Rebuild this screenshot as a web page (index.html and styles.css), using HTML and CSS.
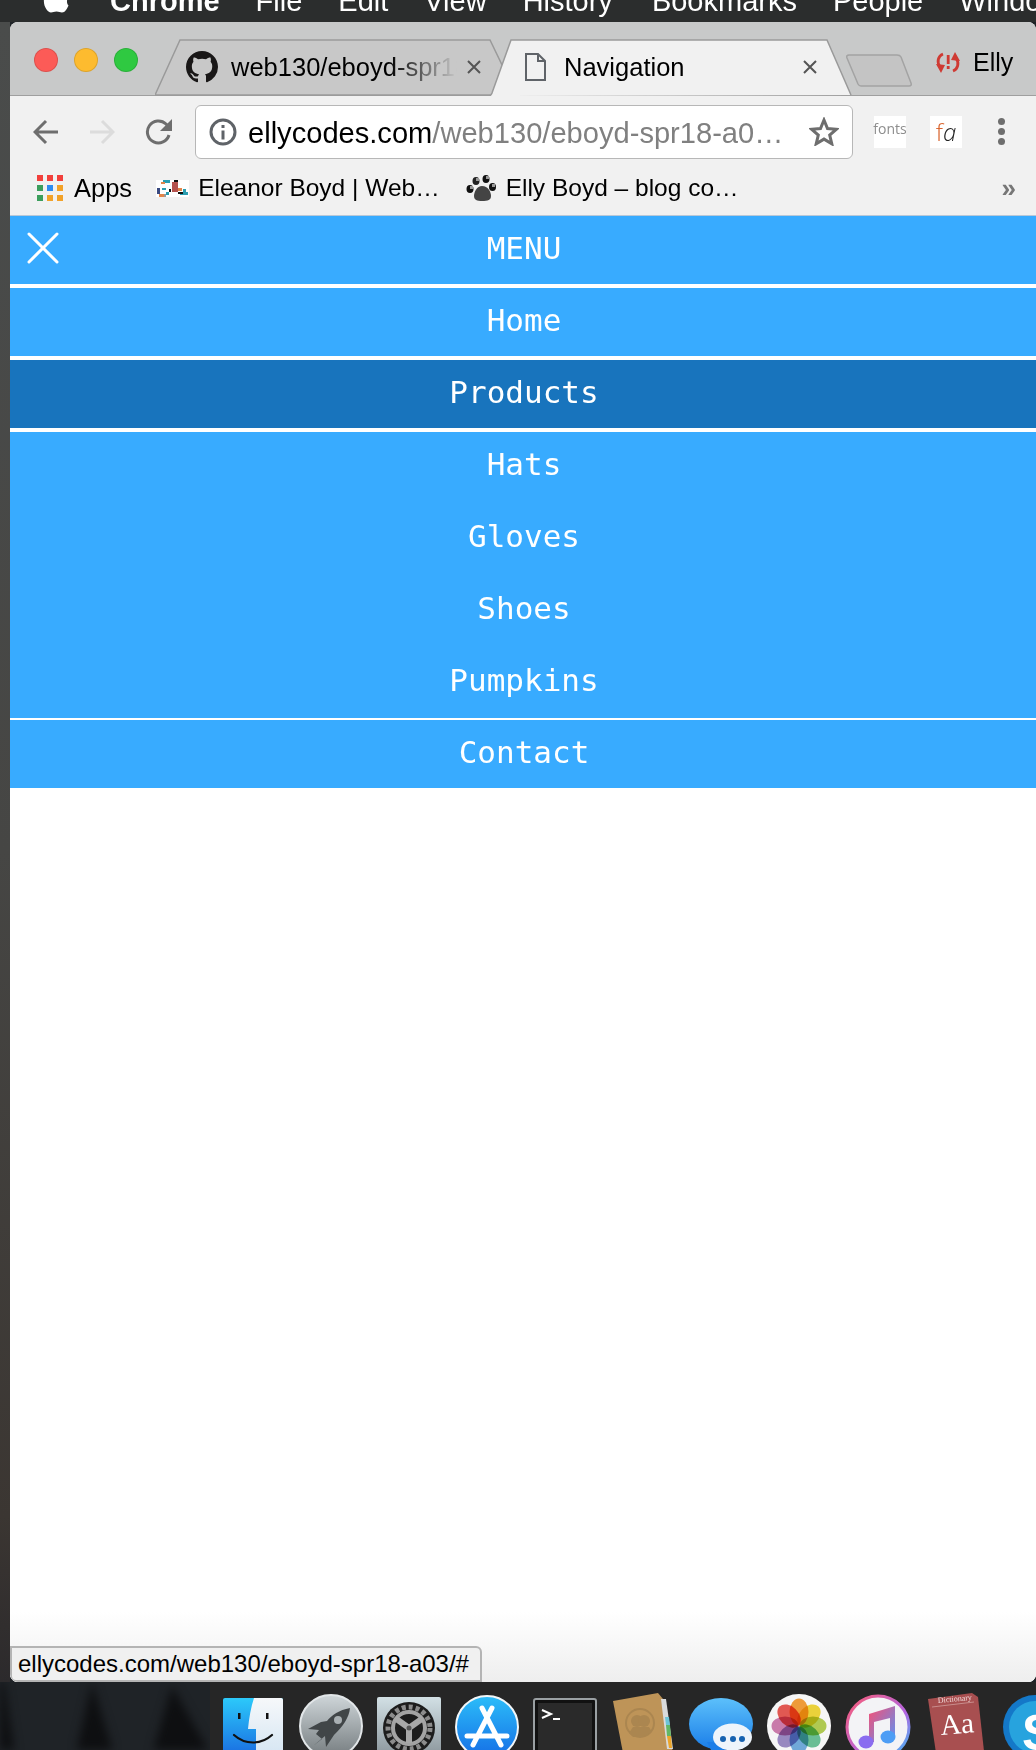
FILE: index.html
```html
<!DOCTYPE html>
<html lang="en">
<head>
<meta charset="utf-8">
<title>Navigation</title>
<link rel="stylesheet" href="styles.css">
</head>
<body>
<div class="menubar">
  <svg class="apple" width="26" height="14" viewBox="0 0 26 14"><path fill="#fff" d="M1 0H24.500C23.500 2 24 5 25.500 6.500 24 10 22 13.500 19 13.500 17 13.500 16 12.500 13.500 12.500 11 12.500 10 13.500 8 13.500 4.500 13.500 0 7 1 0Z"/></svg>
  <span class="menu-app">Chrome</span>
  <span>File</span><span>Edit</span><span>View</span><span>History</span><span class="menu-bm">Bookmarks</span><span>People</span><span>Window</span>
</div>
<div class="middle">
  <div class="desk-strip"></div>
  <div class="window">
    <div class="tabstrip">
      <div class="lights"><i class="light red"></i><i class="light yellow"></i><i class="light green"></i></div>
      <div class="tab tab-back">
        <svg class="tab-shape" viewBox="0 0 348 57" preserveAspectRatio="none"><path d="M0 56 25 1H335L348 28V56Z" fill="#c8c8c8" stroke="#9a9a9a" stroke-width="1.500"/></svg>
        <svg class="favicon-gh" width="32" height="32" viewBox="0 0 16 16"><path fill="#191717" d="M8 0C3.580 0 0 3.580 0 8c0 3.540 2.290 6.530 5.470 7.590.4.070.55-.17.55-.38 0-.19-.01-.82-.01-1.490-2.010.37-2.530-.49-2.690-.94-.09-.23-.48-.94-.82-1.130-.28-.15-.68-.52-.01-.53.63-.01 1.080.58 1.230.82.72 1.210 1.870.87 2.330.66.070-.52.28-.87.51-1.070-1.780-.2-3.640-.89-3.640-3.950 0-.87.31-1.590.82-2.150-.08-.2-.36-1.020.08-2.120 0 0 .67-.21 2.200.82.64-.18 1.320-.27 2-.27s1.360.09 2 .27c1.530-1.040 2.200-.82 2.200-.82.44 1.100.16 1.920.08 2.120.51.560.82 1.270.82 2.150 0 3.070-1.870 3.750-3.650 3.950.29.250.54.730.54 1.480 0 1.070-.01 1.930-.01 2.200 0 .21.150.46.550.38A8.010 8.010 0 0 0 16 8c0-4.420-3.580-8-8-8z"/></svg>
        <span class="tab-title fade">web130/eboyd-spr18</span>
        <svg class="tab-x" width="14" height="14" viewBox="0 0 14 14"><path d="M1 1 13 13M13 1 1 13" stroke="#555" stroke-width="2"/></svg>
      </div>
      <div class="tab tab-active">
        <svg class="tab-shape" viewBox="0 0 363 58" preserveAspectRatio="none"><path d="M0 58C1 58 2 57 3 55L22 1H338L362 57" fill="#f1f1f1" stroke="#9a9a9a" stroke-width="1.500"/></svg>
        <svg class="page-icon" width="21" height="28" viewBox="0 0 21 28"><path d="M1 1H13L20 8V27H1Z M13 1V8H20" fill="none" stroke="#5f6368" stroke-width="2"/></svg>
        <span class="tab-title">Navigation</span>
        <svg class="tab-x" width="14" height="14" viewBox="0 0 14 14"><path d="M1 1 13 13M13 1 1 13" stroke="#555" stroke-width="2"/></svg>
      </div>
      <svg class="newtab" width="66" height="33" viewBox="0 0 66 33"><path d="M3 1H51Q54 1 55 3L65 29Q66 32 63 32H15Q13 32 12 30L1 4Q0 1 3 1Z" fill="#c4c4c4" stroke="#a3a3a3" stroke-width="1.500"/></svg>
      <div class="profile">
        <svg width="26" height="23" viewBox="0 0 26 23"><g fill="none" stroke="#cf3a33" stroke-width="2.800"><path d="M8 3C3 5 1.500 11 5 16"/><path d="M18 20C23 18 24.500 12 21 7"/></g><path fill="#cf3a33" d="M1 13 10 14 6 22ZM25 10 16 9 20 1Z"/><rect x="11.800" y="4" width="2.800" height="9" fill="#cf3a33"/><rect x="11.800" y="15" width="2.800" height="3" fill="#cf3a33"/></svg>
        <span>Elly</span>
      </div>
    </div>
    <div class="toolbar">
      <div class="nav-icons">
        <svg width="26" height="26" viewBox="0 0 26 26"><path d="M25 13H3M13 2 2 13 13 24" fill="none" stroke="#6e6e6e" stroke-width="3"/></svg>
        <svg width="26" height="26" viewBox="0 0 26 26"><path d="M1 13H23M13 2 24 13 13 24" fill="none" stroke="#dcdcdc" stroke-width="3"/></svg>
        <svg width="28" height="28" viewBox="0 0 28 28"><path d="M24 17A11 11 0 1 1 21 6L25 10" fill="none" stroke="#6e6e6e" stroke-width="3"/><path d="M27 1V13H15Z" fill="#6e6e6e"/></svg>
      </div>
      <div class="omnibox">
        <svg width="28" height="28" viewBox="0 0 28 28"><circle cx="14" cy="14" r="12" fill="none" stroke="#5f6368" stroke-width="3"/><rect x="12.500" y="12.500" width="3" height="9" fill="#5f6368"/><rect x="12.500" y="7" width="3" height="3" fill="#5f6368"/></svg>
        <span class="url"><b>ellycodes.com</b>/web130/eboyd-spr18-a0…</span>
        <svg class="star" width="30" height="29" viewBox="0 0 30 29"><path d="M15 3 18.500 11.500 27.500 12.200 20.700 18 22.800 26.800 15 22.100 7.200 26.800 9.300 18 2.500 12.200 11.500 11.500Z" fill="none" stroke="#6e6e6e" stroke-width="3"/></svg>
      </div>
      <div class="ext ext-fonts">fonts</div>
      <div class="ext ext-fa"><span class="f">f</span><span class="a">a</span></div>
      <div class="dots"><i></i><i></i><i></i></div>
    </div>
    <div class="bookmarks">
      <div class="bm bm-apps">
        <div class="apps-grid"><i class="r"></i><i class="r"></i><i class="r"></i><i class="g"></i><i class="b"></i><i class="o"></i><i class="g"></i><i class="o"></i><i class="o"></i></div>
        <span>Apps</span>
      </div>
      <div class="bm bm-eleanor">
        <svg width="33" height="17" viewBox="0 0 33 17" shape-rendering="crispEdges"><rect width="33" height="17" fill="#fff"/><path fill="#2a9db0" d="M7 0h7v3H7zM6 8h4v2H6zM24 12h8v3h-8zM10 12h3v3h-3zM27 9h3v3h-3z"/><path fill="#e2854a" d="M5 2h4v2H5zM3 14h5v3H3zM22 8h4v3h-4z"/><path fill="#3a4a80" d="M1 8h3v6H1z"/><path fill="#b5524e" d="M16 2h6v10h-6z"/><path fill="#111" d="M18 0h4v2h-4zM22 12h5v2h-5zM13 9h2v3h-2z"/><path fill="#999" d="M8 14h2v3H8z"/></svg>
        <span>Eleanor Boyd | Web…</span>
      </div>
      <div class="bm bm-blog">
        <svg width="31" height="27" viewBox="0 0 31 27"><path fill="#444" d="M16 11C22 11 25 17 25 21 25 25 22 26 16 26 11 26 8 25 8 21 8 17 11 11 16 11Z"/><ellipse cx="4" cy="14" rx="3.500" ry="4" fill="#111"/><ellipse cx="10" cy="6" rx="3.500" ry="4" fill="#222"/><ellipse cx="20" cy="4" rx="3.500" ry="4" fill="#111"/><ellipse cx="26.500" cy="12" rx="3.500" ry="4" fill="#111"/><path fill="#999" d="M10 3h3v3h-3zM20 1h3v3h-3zM4 11h3v3H4zM26 9h3v3h-3z"/></svg>
        <span>Elly Boyd – blog co…</span>
      </div>
      <span class="more">»</span>
    </div>
    <main class="page">
      <nav class="site-nav">
        <div class="nav-row thick">
          <svg class="nav-close" width="32" height="32" viewBox="0 0 32 32"><path d="M2 2 30 30M30 2 2 30" stroke="#fff" stroke-width="3" stroke-linecap="round"/></svg>
          <a href="#">MENU</a>
        </div>
        <div class="nav-row thick"><a href="#">Home</a></div>
        <div class="nav-row thick current"><a href="#">Products</a></div>
        <div class="nav-row"><a href="#">Hats</a></div>
        <div class="nav-row"><a href="#">Gloves</a></div>
        <div class="nav-row"><a href="#">Shoes</a></div>
        <div class="nav-row thin"><a href="#">Pumpkins</a></div>
        <div class="nav-row last"><a href="#">Contact</a></div>
      </nav>
      <div class="page-fill"></div>
      <div class="statusbar">ellycodes.com/web130/eboyd-spr18-a03/#</div>
    </main>
  </div>
</div>
<div class="bottom">
  <div class="wallpaper">
    <svg class="trees" width="210" height="68" viewBox="0 0 210 68"><path fill="#0e0f11" d="M-8 0H4L16 80H-8ZM92 0 116 80H74ZM172 4 215 80H150Z"/></svg>
  </div>
  <div class="dock">
    <svg class="dock-icon mr-2" width="60" height="52" viewBox="0 0 60 52"><defs><linearGradient id="fb" x1="0" y1="0" x2="0" y2="1"><stop offset="0" stop-color="#2cc9fa"/><stop offset="1" stop-color="#1a70e2"/></linearGradient><linearGradient id="fw" x1="0" y1="0" x2="0" y2="1"><stop offset="0" stop-color="#f6f8fa"/><stop offset="1" stop-color="#d6e6f3"/></linearGradient></defs><rect width="60" height="56" rx="2" fill="url(#fb)"/><path d="M31 0H58Q60 0 60 2V56H33V31H25C26 20 28 9 31 0Z" fill="url(#fw)"/><rect x="15" y="15" width="2.500" height="6" fill="#111"/><rect x="43" y="15" width="2.500" height="6" fill="#111"/><path d="M11 37C22 47 38 47 49 37" fill="none" stroke="#111" stroke-width="2.200" stroke-linecap="round"/></svg>
    <svg class="dock-icon" width="64" height="56" viewBox="0 0 64 56"><defs><linearGradient id="rk" x1="0" y1="0" x2="0" y2="1"><stop offset="0" stop-color="#cfd6d9"/><stop offset="1" stop-color="#757c7f"/></linearGradient></defs><circle cx="32" cy="32" r="31" fill="url(#rk)" stroke="#e2e6e8" stroke-width="2"/><path d="M51 14C40 16 33 21 28 27L22 28 9 35 20 36 17 40 23 45 14 52 26 42 27 53 35 41C44 32 50 24 51 14Z" fill="#414648"/><circle cx="39" cy="26" r="4" fill="#a9b0b3"/></svg>
    <svg class="dock-icon" width="64" height="53" viewBox="0 0 64 53"><defs><linearGradient id="gb" x1="0" y1="0" x2="0" y2="1"><stop offset="0" stop-color="#d2e0e5"/><stop offset="1" stop-color="#8f9aa0"/></linearGradient></defs><rect width="64" height="56" rx="2" fill="url(#gb)"/><circle cx="32" cy="31" r="26" fill="#1d1d1d"/><circle cx="32" cy="31" r="21" fill="none" stroke="#8c8c8c" stroke-width="5" stroke-dasharray="4 3"/><circle cx="32" cy="31" r="16" fill="none" stroke="#a3a3a3" stroke-width="4"/><path d="M32 31 18 21M32 31 46 21M32 31V46" stroke="#a8a8a8" stroke-width="6"/><circle cx="32" cy="31" r="2.500" fill="#555"/></svg>
    <svg class="dock-icon" width="64" height="55" viewBox="0 0 64 55"><defs><linearGradient id="as" x1="0" y1="0" x2="0" y2="1"><stop offset="0" stop-color="#2cbdf9"/><stop offset="1" stop-color="#156ee6"/></linearGradient></defs><circle cx="32" cy="32" r="31" fill="url(#as)" stroke="#f2f6f8" stroke-width="2"/><g stroke="#fff" stroke-width="5" stroke-linecap="round" fill="none"><path d="M37 13 18 50M27 13 46 50M12 41H52"/></g></svg>
    <svg class="dock-icon mr-2" width="64" height="52" viewBox="0 0 64 52"><rect x="1" y="1" width="62" height="60" rx="2" fill="#111" stroke="#9aa0a3" stroke-width="2"/><rect x="5" y="5" width="54" height="56" fill="#2a2a2a"/><path d="M9 12 18 16 9 20" fill="none" stroke="#fff" stroke-width="2"/><path d="M20 21H27" stroke="#fff" stroke-width="2"/></svg>
    <svg class="dock-icon mr-2" width="60" height="57" viewBox="0 0 60 57"><path d="M0 8 45 0 50 6 60 60 10 60Z" fill="#be9458"/><path d="M48 6H53L60 56H54Z" fill="#d9dadb"/><path d="M52 24H56L57 32H53Z" fill="#6dc5d8"/><path d="M53 32H57L58 43H54Z" fill="#63b765"/><path d="M54 43H58L59 55H56Z" fill="#eba52a"/><circle cx="27" cy="30" r="14" fill="none" stroke="#ab8650" stroke-width="2"/><circle cx="24" cy="28" r="6" fill="#ab8650"/><circle cx="31" cy="28" r="6" fill="#ab8650"/><path d="M16 40 20 34H36L39 39 30 44 20 44Z" fill="#ab8650"/></svg>
    <svg class="dock-icon" width="64" height="52" viewBox="0 0 64 52"><defs><linearGradient id="ms" x1="0" y1="0" x2="0" y2="1"><stop offset="0" stop-color="#5cc0fb"/><stop offset="1" stop-color="#1a7de8"/></linearGradient></defs><ellipse cx="32" cy="26" rx="32" ry="26" fill="url(#ms)"/><path d="M18 44 22 52H36L30 44Z" fill="#1a7de8"/><ellipse cx="43.500" cy="39" rx="19.500" ry="13.500" fill="#edf4fb"/><circle cx="34" cy="41" r="3" fill="#1662b0"/><circle cx="44" cy="41" r="3" fill="#1662b0"/><circle cx="53" cy="41" r="3" fill="#1662b0"/></svg>
    <svg class="dock-icon" width="64" height="56" viewBox="0 0 64 56"><circle cx="32" cy="32" r="32" fill="#f6f6f6"/><g transform="translate(32 32)"><ellipse class="petal" cy="-14" rx="9.500" ry="13.500" fill="#f7a13b"/><ellipse class="petal" cy="-14" rx="9.500" ry="13.500" fill="#f3d93c" transform="rotate(45)"/><ellipse class="petal" cy="-14" rx="9.500" ry="13.500" fill="#b6d155" transform="rotate(90)"/><ellipse class="petal" cy="-14" rx="9.500" ry="13.500" fill="#6dc49a" transform="rotate(135)"/><ellipse class="petal" cy="-14" rx="9.500" ry="13.500" fill="#74aee0" transform="rotate(180)"/><ellipse class="petal" cy="-14" rx="9.500" ry="13.500" fill="#9e8dc7" transform="rotate(225)"/><ellipse class="petal" cy="-14" rx="9.500" ry="13.500" fill="#d17fb0" transform="rotate(270)"/><ellipse class="petal" cy="-14" rx="9.500" ry="13.500" fill="#ea5b55" transform="rotate(315)"/></g></svg>
    <svg class="dock-icon mr-3" width="66" height="56" viewBox="0 0 66 56"><defs><linearGradient id="ring" x1="0" y1="0" x2="1" y2="1"><stop offset="0" stop-color="#fb5c74"/><stop offset=".6" stop-color="#b364e0"/><stop offset="1" stop-color="#35c0f5"/></linearGradient><linearGradient id="note" x1="0" y1="0" x2="1" y2="1"><stop offset="0" stop-color="#fa4e72"/><stop offset="1" stop-color="#5a92f5"/></linearGradient></defs><circle cx="33" cy="33" r="31" fill="#f3f3f6" stroke="url(#ring)" stroke-width="3"/><path d="M24 20 50 12V42H45V24L29 28V48H24Z" fill="url(#note)"/><ellipse cx="21" cy="48" rx="7.500" ry="6.500" fill="#8a6cf0"/><ellipse cx="43" cy="43" rx="7.500" ry="6.500" fill="#4d9df5"/></svg>
    <svg class="dock-icon mr-4" width="56" height="57" viewBox="0 0 56 57"><path d="M0 6 44 0 50 4 56 58 8 60Z" fill="#a84f50"/><path d="M4 14 46 9" stroke="#c98d8c" stroke-width="1"/><text class="dict-small" x="10" y="10" transform="rotate(-5 10 10)">Dictionary</text><text class="dict-big" x="13" y="42" transform="rotate(-5 13 42)">Aa</text></svg>
    <svg class="dock-icon" width="40" height="56" viewBox="0 0 40 56"><circle cx="33" cy="33" r="32" fill="#1478c8"/><circle cx="33" cy="33" r="26" fill="#27a3de"/><text class="skype" x="20" y="56">S</text></svg>
  </div>
</div>
</body>
</html>
```

FILE: styles.css
```css
* { box-sizing: border-box; }
html, body { margin: 0; padding: 0; }
body {
  width: 1036px;
  height: 1750px;
  overflow: hidden;
  display: flex;
  flex-direction: column;
  background: #1f2327;
  font-family: "Liberation Sans", Arial, sans-serif;
  color: #000;
}
.menubar {
  flex: 0 0 22px;
  height: 22px;
  background: #2b2d2d;
  display: flex;
  align-items: flex-end;
  padding: 0 0 6px 43px;
  color: #fff;
  font-size: 29px;
  line-height: 29px;
  gap: 36px;
  white-space: nowrap;
  clip-path: inset(0);
}
.menubar > * { flex: none; }
.apple { margin: 0 5px 3px 0; }
.menu-app { font-weight: 700; }
.menu-bm { margin-left: 3px; }
.middle { flex: 0 0 1660px; display: flex; }
.desk-strip { flex: 0 0 10px; background: linear-gradient(#4a4c4b, #464644 50%, #3b3632 90%, #2c2a2c); }
.window {
  flex: 1;
  min-width: 0;
  display: flex;
  flex-direction: column;
  background: #fff;
  border-radius: 8px;
  overflow: hidden;
}
.tabstrip {
  flex: 0 0 74px;
  display: flex;
  align-items: flex-end;
  background: #c8c9c9;
  border-bottom: 1px solid #9f9f9f;
  position: relative;
}
.lights { display: flex; gap: 16px; padding: 0 0 0 24px; align-self: flex-start; margin-top: 26px; width: 145px; }
.light { width: 24px; height: 24px; border-radius: 50%; border: 1px solid rgba(0,0,0,.12); display: block; }
.red { background: #fc5b57; }
.yellow { background: #fdbb2f; }
.green { background: #2fc941; }
.tab { position: relative; height: 57px; display: flex; align-items: center; margin-bottom: -1px; padding-bottom: 2px; }
.tab-shape { position: absolute; inset: 0; width: 100%; height: 100%; }
.tab > *:not(.tab-shape) { position: relative; }
.tab-back { width: 348px; padding-left: 31px; z-index: 0; }
.tab-active { width: 363px; margin-left: -14px; padding-left: 36px; z-index: 1; }
.tab-title { font-size: 25.500px; line-height: 30px; white-space: nowrap; overflow: hidden; }
.tab-back .tab-title { width: 226px; margin-left: 13px; }
.tab-active .tab-title { width: 118px; margin-left: 18px; overflow: visible; }
.fade { -webkit-mask-image: linear-gradient(90deg, #000 70%, transparent 100%); mask-image: linear-gradient(90deg, #000 70%, transparent 100%); }
.tab-back .tab-x { margin-left: 10px; }
.tab-active .tab-x { margin-left: 121px; }
.newtab { align-self: flex-start; margin: 32px 0 0 -6px; }
.profile { display: flex; align-items: center; gap: 12px; align-self: flex-start; margin: 25px 0 0 23px; font-size: 25px; line-height: 30px; }
.toolbar {
  flex: 0 0 68px;
  background: #f1f1f1;
  display: flex;
  align-items: center;
  padding: 3px 0 0 23px;
}
.nav-icons { display: flex; align-items: center; gap: 30px; width: 162px; }
.omnibox {
  width: 658px;
  height: 54px;
  background: #fff;
  border: 1.500px solid #b7b7b7;
  border-radius: 6px;
  display: flex;
  align-items: center;
  padding-left: 13px;
  white-space: nowrap;
}
.url { font-size: 29.100px; line-height: 40px; color: #808080; margin-left: 11px; flex: 1; padding-top: 2px; }
.url b { font-weight: 400; color: #000; }
.star { margin-right: 13px; }
.ext { width: 32px; height: 32px; background: #fff; display: flex; align-items: center; justify-content: center; }
.ext-fonts { margin-left: 21px; padding-bottom: 6px; font-family: "Open Sans", sans-serif; font-size: 14px; color: #8d8d8d; }
.ext-fa { margin-left: 24px; font-family: "Open Sans", sans-serif; font-size: 24px; font-weight: 300; }
.ext-fa .f { color: #d9622b; }
.ext-fa .a { font-style: italic; color: #222; }
.dots { display: flex; flex-direction: column; gap: 3px; margin-left: 36px; }
.dots i { display: block; width: 7px; height: 7px; border-radius: 50%; background: #6e6e6e; }
.bookmarks {
  flex: 0 0 52px;
  background: #f1f1f1;
  border-bottom: 1px solid #b8c8d8;
  display: flex;
  align-items: center;
  font-size: 24.500px;
  padding: 0 0 3px 27px;
  white-space: nowrap;
}
.bm { display: flex; align-items: center; }
.bm-apps { font-size: 25.500px; }
.apps-grid { display: grid; grid-template-columns: repeat(3, 6px); grid-auto-rows: 6px; gap: 4px; margin-right: 11px; }
.apps-grid i { display: block; }
.apps-grid .r { background: #f2403b; }
.apps-grid .g { background: #3b9e5c; }
.apps-grid .b { background: #2f8cf0; }
.apps-grid .o { background: #f2a229; }
.bm-eleanor { margin-left: 24px; }
.bm-eleanor svg { margin-right: 9px; }
.bm-blog { margin-left: 26px; }
.bm-blog svg { margin-right: 9px; }
.more { margin-left: auto; margin-right: 20px; color: #777; font-size: 26px; font-weight: 700; line-height: 26px; }
.page { flex: 1; min-height: 0; display: flex; flex-direction: column; position: relative; background: #fff; }
.site-nav { display: flex; flex-direction: column; background: #38abff; }
.nav-row {
  height: 72px;
  display: flex;
  align-items: center;
  justify-content: center;
  position: relative;
  border-bottom: 4px solid transparent;
  padding: 0 0 4px 2px;
}
.nav-row a { color: #fff; text-decoration: none; font-family: "DejaVu Sans Mono", monospace; font-size: 31px; line-height: 36px; }
.thick { border-bottom-color: #fff; }
.current { background: #1874bd; background-clip: padding-box; }
.thin { border-bottom: 2px solid #fff; padding-bottom: 6px; }
.last { height: 68px; border-bottom: 0; }
.nav-close { position: absolute; left: 17px; top: 16px; }
.page-fill { flex: 1; background: linear-gradient(#fff calc(100% - 70px), #eeeeee); }
.statusbar {
  position: absolute;
  left: 0;
  bottom: 0;
  height: 36px;
  width: 472px;
  background: #f0f0f0;
  border: 2px solid #b4b4b4;
  border-radius: 0 6px 0 6px;
  font-size: 24px;
  line-height: 32px;
  padding-left: 6px;
  white-space: nowrap;
}
.bottom { flex: 1; display: flex; min-height: 0; overflow: hidden; }
.wallpaper { flex: 0 0 210px; overflow: hidden; }
.trees { display: block; filter: blur(5px); }
.dock { flex: 1; background: #262626; display: flex; align-items: flex-end; padding-left: 13px; gap: 14px; }
.dock-icon { flex: none; display: block; }
.mr-2 { margin-right: 2px; }
.mr-3 { margin-right: 3px; }
.mr-4 { margin-right: 4px; }
.petal { mix-blend-mode: multiply; }
.dict-small { font-family: "Liberation Serif", serif; font-size: 8px; fill: #f2dcdc; }
.dict-big { font-family: "Liberation Serif", serif; font-size: 29px; fill: #fff; }
.skype { font-family: "Liberation Sans", sans-serif; font-weight: 700; font-size: 50px; fill: #fff; }
```
